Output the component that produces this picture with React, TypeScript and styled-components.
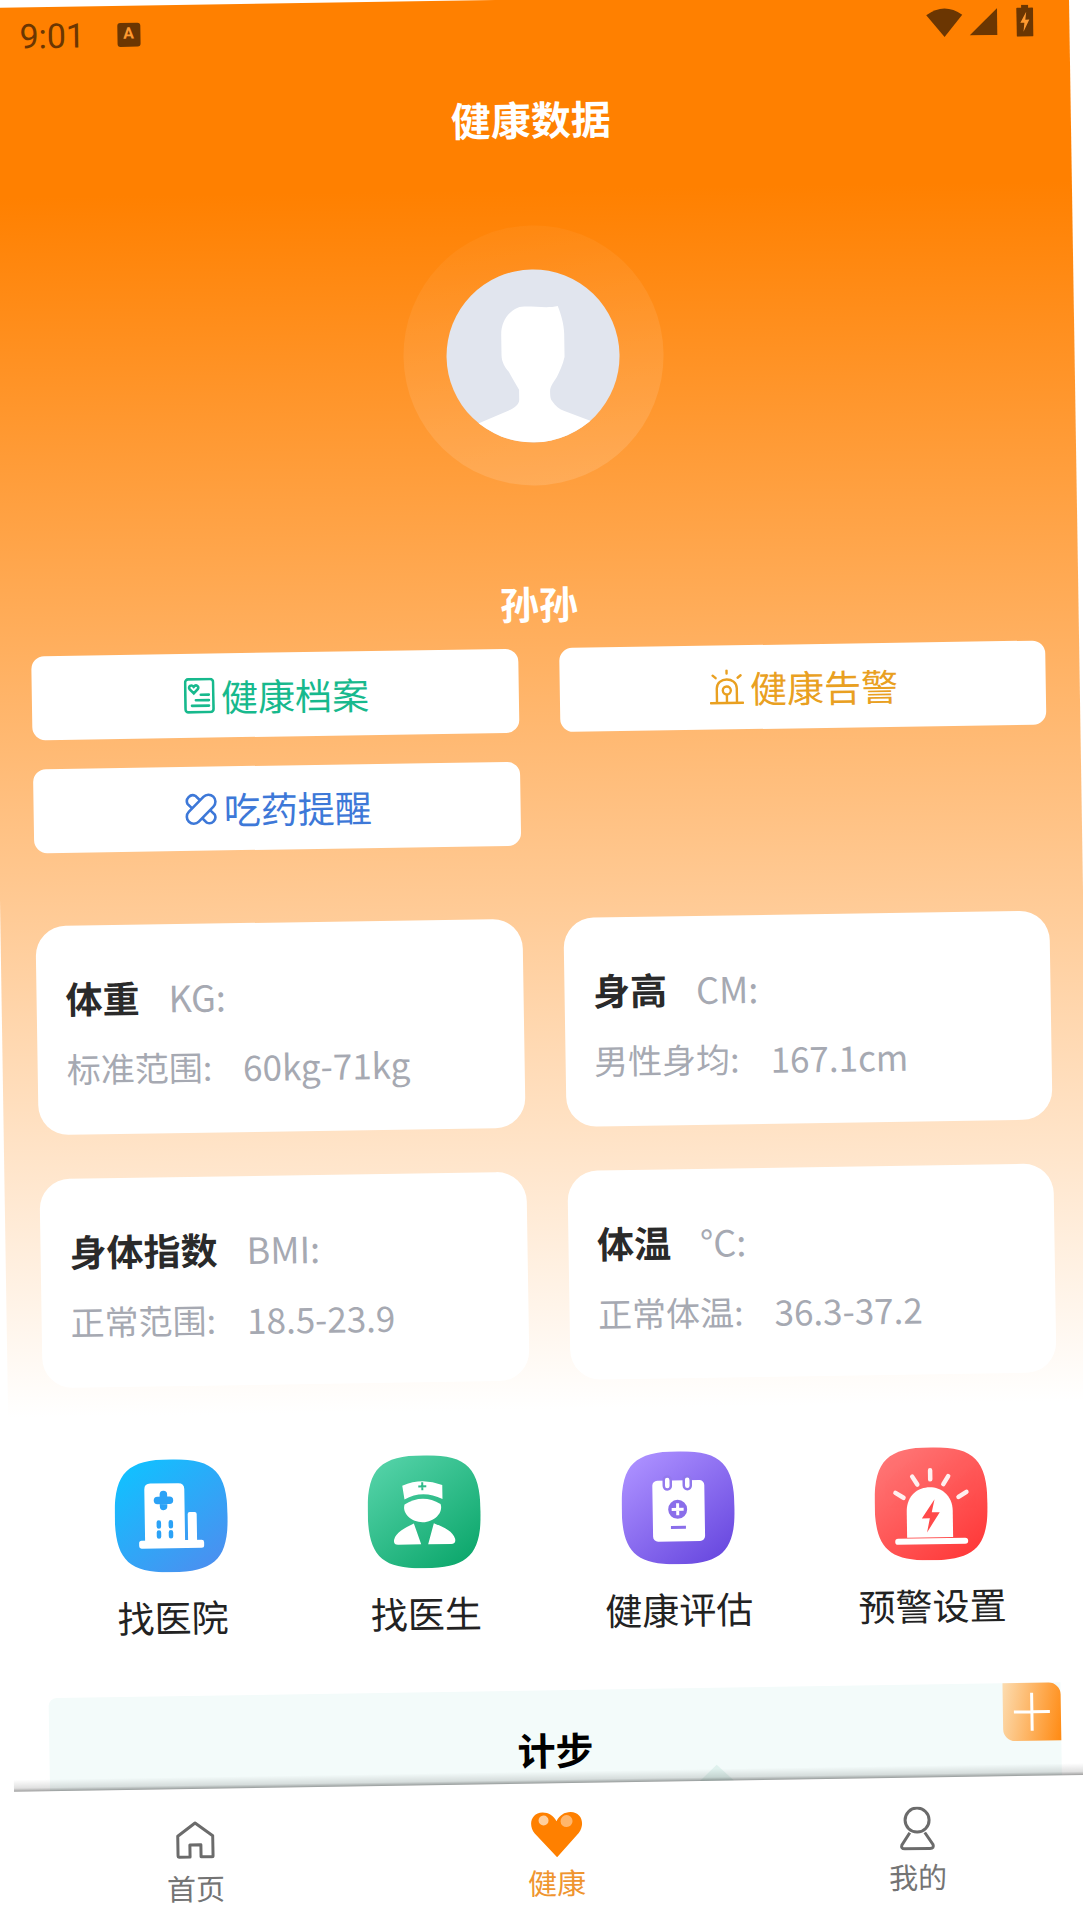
import React from "react";
import styled, { createGlobalStyle } from "styled-components";

const GlobalStyle = createGlobalStyle`
  html, body {
    margin: 0;
    padding: 0;
    width: 1083px;
    height: 1926px;
    overflow: hidden;
    background: #fff;
    font-family: "Noto Sans CJK SC", "Liberation Sans", sans-serif;
  }
`;

const Page = styled.div`
  width: 1083px;
  margin: 8px 0 0 -14px;
  transform-origin: 0 0;
  transform: rotate(-0.9deg);
  background: linear-gradient(180deg, #ff8000 0, #ff8000 190px, #fff 1410px);
`;

const StatusBar = styled.div`
  height: 58px;
  padding: 0 36px 0 33px;
  display: flex;
  align-items: center;
  color: #6b3602;
`;

const Time = styled.span`
  font-family: Roboto, sans-serif;
  font-size: 34px;
`;

const ABadge = styled.span`
  width: 23px;
  height: 24px;
  margin-left: 32px;
  border-radius: 3px;
  background: #6b3602;
  color: #ff9a30;
  font: 700 16px/22px Roboto, sans-serif;
  text-align: center;
`;

const StatusIcons = styled.div`
  margin-left: auto;
  display: flex;
  align-items: center;
  gap: 6px;
  svg:last-child {
    margin-left: 13px;
  }
`;

const Title = styled.h1`
  margin: 31px 0 0;
  padding-left: 3px;
  font-size: 40px;
  line-height: 60px;
  font-weight: 700;
  color: #fff;
  text-align: center;
`;

const AvatarRing = styled.div`
  width: 260px;
  height: 260px;
  margin: 77px auto 0;
  border-radius: 50%;
  background: linear-gradient(170deg, rgba(255, 255, 255, 0.03), rgba(255, 255, 255, 0.14));
  display: flex;
  align-items: center;
  justify-content: center;
`;

const AvatarCircle = styled.div`
  width: 173px;
  height: 173px;
  border-radius: 50%;
  overflow: hidden;
  background: #e1e5ee;
  svg {
    display: block;
  }
`;

const Name = styled.div`
  margin-top: 92px;
  font-size: 39px;
  line-height: 50px;
  font-weight: 700;
  color: #fff;
  text-align: center;
  padding-left: 4px;
`;

const TwoColumns = styled.div<{ $rowGap: number; $top: number }>`
  display: grid;
  grid-template-columns: 1fr 1fr;
  column-gap: 41px;
  row-gap: ${(p) => p.$rowGap}px;
  padding: 0 34px 0 35px;
  margin-top: ${(p) => p.$top}px;
`;

const LinkButton = styled.div<{ $color: string }>`
  height: 84px;
  box-sizing: border-box;
  padding-left: 3px;
  border-radius: 13px;
  background: #fff;
  color: ${(p) => p.$color};
  font-size: 37px;
  display: flex;
  align-items: center;
  justify-content: center;
  gap: 6px;
`;

const DataCard = styled.div`
  height: 209px;
  box-sizing: border-box;
  padding: 47px 29px 0;
  border-radius: 30px;
  background: #fff;
`;

const CardLine = styled.div<{ $second?: boolean }>`
  display: flex;
  align-items: center;
  height: 50px;
  margin-top: ${(p) => (p.$second ? 20 : 0)}px;
  white-space: nowrap;
  font-size: 34px;
  color: #a6a9b2;
`;

const CardName = styled.span`
  font-size: 37px;
  font-weight: 700;
  color: #2a2a2a;
  margin-right: 29px;
`;

const CardUnit = styled.span`
  font-size: 36px;
`;

const CardValue = styled.span`
  margin-left: 31px;
  font-size: 35px;
`;

const Actions = styled.div`
  margin-top: 73px;
  padding: 0 35px;
  display: grid;
  grid-template-columns: repeat(4, 1fr);
`;

const Action = styled.div`
  display: flex;
  flex-direction: column;
  align-items: center;
`;

const ActionLabel = styled.div`
  margin-top: 19px;
  font-size: 37px;
  line-height: 50px;
  color: #222;
`;

const StepPanel = styled.div`
  position: relative;
  height: 93px;
  margin: 55px 35px 0 36px;
  background: #f3fbfa;
  border-radius: 8px 0 0 0;
  text-align: center;
`;

const StepTitle = styled.div`
  padding-top: 34px;
  font-size: 38px;
  line-height: 50px;
  font-weight: 700;
  color: #000;
`;

const StepMark = styled.div`
  position: absolute;
  left: 650px;
  bottom: 0;
  width: 0;
  height: 0;
  border-left: 17px solid transparent;
  border-right: 17px solid transparent;
  border-bottom: 16px solid #dff1ed;
`;

const AddButton = styled.div`
  position: absolute;
  top: 0;
  right: 0;
  width: 58px;
  height: 58px;
  border-radius: 0 12px 0 12px;
  background: linear-gradient(100deg, #fcdcb0 0, #ff8a12 100%);
  svg {
    display: block;
  }
`;

const TabBar = styled.div`
  position: relative;
  height: 170px;
  background: #fff;
  display: grid;
  grid-template-columns: repeat(3, 1fr);
  &::before {
    content: "";
    position: absolute;
    left: 0;
    right: 0;
    top: -12px;
    height: 12px;
    background: linear-gradient(180deg, rgba(0, 0, 0, 0), rgba(0, 0, 0, 0.12) 70%, rgba(0, 0, 0, 0.38));
  }
`;

const Tab = styled.div<{ $active?: boolean }>`
  height: 121px;
  display: flex;
  flex-direction: column;
  align-items: center;
  color: ${(p) => (p.$active ? "#ef952f" : "#747474")};
`;

const TabIcon = styled.div`
  height: 100px;
  display: flex;
  align-items: center;
  justify-content: center;
  box-sizing: border-box;
  padding-top: 2px;
`;

const TabLabel = styled.div`
  margin-top: -22px;
  font-size: 29px;
  line-height: 40px;
`;

const WifiIcon = () => (
  <svg width="38" height="30" viewBox="0 0 38 30">
    <path d="M19 30 L1 8 Q19 -5 37 8 Z" fill="#6b3602" />
  </svg>
);

const SignalIcon = () => (
  <svg width="28" height="27" viewBox="0 0 28 27">
    <path d="M0 27 L28 0 V27 Z" fill="#6b3602" />
  </svg>
);

const BatteryIcon = () => (
  <svg width="17" height="32" viewBox="0 0 17 32">
    <path d="M5 0 H12 V3 H16 Q17 3 17 4 V31 Q17 32 16 32 H1 Q0 32 0 31 V4 Q0 3 1 3 H5 Z" fill="#6b3602" />
    <path d="M10 7 L4 18 H8 L7 27 L13 15 H9 Z" fill="#ff9a30" />
  </svg>
);

const AvatarFigure = () => (
  <svg width="173" height="173" viewBox="0 0 173 173">
    <path
      d="M72 38 C80 35 100 40 112 37 C115 45 118 55 118 65 L118 88 C116 96 113 102 110 108 C107 113 103 117 103 122 C103 126 103 130 105 132 C108 137 112 140 117 142 L150 155 L150 173 L26 173 L26 155 L63 140 C67 138 72 135 72 130 L72 120 C68 113 65 108 62 102 C58 97 55 92 55 85 L55 65 C55 52 62 42 72 38 Z"
      fill="#fff"
    />
  </svg>
);

const RecordIcon = () => (
  <svg width="31" height="36" viewBox="0 0 31 36" fill="none" stroke="currentColor" strokeWidth="2.6" strokeLinecap="round">
    <rect x="1.5" y="1.5" width="28" height="33" rx="3" />
    <path d="M10 15.5 L5.8 11.2 C4.2 8.6 7.6 6.2 10 9 C12.4 6.2 15.8 8.6 14.2 11.2 Z" />
    <path d="M17 17 H25 M12 22.5 H25 M8 28 H25" />
  </svg>
);

const AlertIcon = () => (
  <svg width="34" height="36" viewBox="0 0 34 36" fill="none" stroke="currentColor" strokeWidth="2.4" strokeLinecap="round">
    <path d="M7 33 V19 C7 7 27 7 27 19 V33" />
    <path d="M1 33.5 H33" />
    <circle cx="17" cy="21" r="4" />
    <path d="M17 26 V33 M17 1 V4 M3 6 L6 8.5 M31 6 L28 8.5" />
  </svg>
);

const PillIcon = () => (
  <svg width="33" height="33" viewBox="0 0 33 33" fill="none" stroke="currentColor" strokeWidth="2.6">
    <rect x="-1" y="9.5" width="35" height="14" rx="7" transform="rotate(-45 16.5 16.5)" />
    <path d="M15.5 7.5 L11 3 A6 6 0 0 0 3 11 L7.5 15.5 M25.5 17.5 L30 22 A6 6 0 0 1 22 30 L17.5 25.5" />
  </svg>
);

const SQUIRCLE = "M56.5 0 C100 0 113 13 113 56.5 C113 100 100 113 56.5 113 C13 113 0 100 0 56.5 C0 13 13 0 56.5 0 Z";

const Squircle = ({ id, from, to, children }: { id: string; from: string; to: string; children: React.ReactNode }) => (
  <svg width="113" height="113" viewBox="0 0 113 113">
    <defs>
      <linearGradient id={id} x1="0.15" y1="0.05" x2="0.85" y2="0.95">
        <stop offset="0" stopColor={from} />
        <stop offset="1" stopColor={to} />
      </linearGradient>
    </defs>
    <path d={SQUIRCLE} fill={`url(#${id})`} />
    {children}
  </svg>
);

const HospitalIcon = () => (
  <Squircle id="hospital" from="#12c0ff" to="#4a90f0">
    <path d="M30 85 V30 Q30 24 36 24 H64 Q70 24 70 30 V85 Z" fill="#fff" />
    <rect x="24" y="81" width="65" height="8" rx="2.5" fill="#fff" />
    <rect x="73" y="53" width="9" height="32" rx="2" fill="#fff" />
    <path d="M49 35 V47 M43 41 H55" stroke="#2ba2f6" strokeWidth="7.5" strokeLinecap="round" />
    <path d="M44 63 V67 M56 63 V67 M44 73 V77 M56 73 V77" stroke="#2ba2f6" strokeWidth="4.5" strokeLinecap="round" />
  </Squircle>
);

const DoctorIcon = () => (
  <Squircle id="doctor" from="#52d1a6" to="#0ea86d">
    <path d="M35 30 Q55 22 75 30 V44 Q55 34 37 44 Z" fill="#fff" />
    <path d="M55 27 V35 M51 31 H59" stroke="#2fbb8a" strokeWidth="2" />
    <path d="M37 49 Q55 38 73 49 C76 58 66 67 55 67 C44 67 34 58 37 49 Z" fill="#fff" />
    <path d="M30 89 Q25 89 26 84 C28 76 38 72 46 68 L53 89 Z M60 89 L66 68 C75 72 85 76 87 84 Q88 89 83 89 Z" fill="#fff" />
  </Squircle>
);

const AssessIcon = () => (
  <Squircle id="assess" from="#ab8fff" to="#6a4ae0">
    <rect x="31" y="29" width="52" height="61" rx="5" fill="#fff" />
    <rect x="42.5" y="25" width="7" height="13" rx="3.5" fill="#fff" stroke="#9479ee" strokeWidth="2.5" />
    <rect x="62.5" y="25" width="7" height="13" rx="3.5" fill="#fff" stroke="#9077ec" strokeWidth="2.5" />
    <circle cx="56" cy="58" r="9.5" fill="#8a6eea" />
    <path d="M56 52 V64 M50 58 H62" stroke="#fff" strokeWidth="3" />
    <path d="M49 76 H64" stroke="#8a6eea" strokeWidth="3" />
  </Squircle>
);

const WarnIcon = () => (
  <Squircle id="warn" from="#ff7575" to="#ff3a3a">
    <path d="M32 90 V64 C32 32 78 32 78 64 V90 Z" fill="#fff" />
    <rect x="20" y="91" width="73" height="6" rx="3" fill="#fff" />
    <path d="M56 23 V32 M38 29 L43 37 M74 29 L69 37 M21 45 L29 50 M92 45 L84 50" stroke="#fff" strokeWidth="4.5" strokeLinecap="round" opacity="0.9" />
    <path d="M60 52 L47 71 H55 L52 85 L65 65 H57 Z" fill="#ff4a4a" />
  </Squircle>
);

const PlusIcon = () => (
  <svg width="58" height="58" viewBox="0 0 58 58">
    <path d="M29 10 V48 M11 29 H47" stroke="#fff" strokeWidth="3" />
  </svg>
);

const HomeIcon = () => (
  <svg width="39" height="38" viewBox="0 0 39 38" fill="none" stroke="#6b6b6b" strokeWidth="3" strokeLinejoin="round">
    <path d="M2 35 V15 L19.5 2 L37 15 V35 Q37 36 36 36 H25 V24 H14 V36 H3 Q2 36 2 35 Z" />
  </svg>
);

const HeartIcon = () => (
  <svg width="52" height="46" viewBox="0 0 52 46">
    <path d="M26 46 L4 22 C-3 13 1 1 12 1 C18 1 23 4 26 10 C29 4 34 1 40 1 C51 1 55 13 48 22 Z" fill="#ff8000" />
    <circle cx="13" cy="9" r="5" fill="#ffcf9e" />
    <circle cx="36" cy="10" r="6" fill="#ffb66c" />
  </svg>
);

const PersonIcon = () => (
  <svg width="37" height="44" viewBox="0 0 37 44" fill="none" stroke="#6b6b6b" strokeWidth="3">
    <circle cx="18.5" cy="13.5" r="12" />
    <path d="M11 26 L3 38 Q1.5 42 6 42 H31 Q35.5 42 34 38 L26 26" />
  </svg>
);

const buttons = [
  { label: "健康档案", color: "#17b98d", icon: <RecordIcon /> },
  { label: "健康告警", color: "#e9a021", icon: <AlertIcon /> },
  { label: "吃药提醒", color: "#3d78d8", icon: <PillIcon /> },
];

const cards = [
  { name: "体重", unit: "KG:", label: "标准范围:", value: "60kg-71kg" },
  { name: "身高", unit: "CM:", label: "男性身均:", value: "167.1cm" },
  { name: "身体指数", unit: "BMI:", label: "正常范围:", value: "18.5-23.9" },
  { name: "体温", unit: "°C:", label: "正常体温:", value: "36.3-37.2" },
];

const actions = [
  { label: "找医院", icon: <HospitalIcon /> },
  { label: "找医生", icon: <DoctorIcon /> },
  { label: "健康评估", icon: <AssessIcon /> },
  { label: "预警设置", icon: <WarnIcon /> },
];

const App = () => {
  return (
    <>
      <GlobalStyle />
      <Page>
        <StatusBar>
          <Time>9:01</Time>
          <ABadge>A</ABadge>
          <StatusIcons>
            <WifiIcon />
            <SignalIcon />
            <BatteryIcon />
          </StatusIcons>
        </StatusBar>
        <Title>健康数据</Title>
        <AvatarRing>
          <AvatarCircle>
            <AvatarFigure />
          </AvatarCircle>
        </AvatarRing>
        <Name>孙孙</Name>
        <TwoColumns $rowGap={29} $top={21}>
          {buttons.map((b) => (
            <LinkButton key={b.label} $color={b.color}>
              {b.icon}
              {b.label}
            </LinkButton>
          ))}
        </TwoColumns>
        <TwoColumns $rowGap={44} $top={73}>
          {cards.map((c) => (
            <DataCard key={c.name}>
              <CardLine>
                <CardName>{c.name}</CardName>
                <CardUnit>{c.unit}</CardUnit>
              </CardLine>
              <CardLine $second>
                {c.label}
                <CardValue>{c.value}</CardValue>
              </CardLine>
            </DataCard>
          ))}
        </TwoColumns>
        <Actions>
          {actions.map((a) => (
            <Action key={a.label}>
              {a.icon}
              <ActionLabel>{a.label}</ActionLabel>
            </Action>
          ))}
        </Actions>
        <StepPanel>
          <StepTitle>计步</StepTitle>
          <StepMark />
          <AddButton>
            <PlusIcon />
          </AddButton>
        </StepPanel>
        <TabBar>
          <Tab>
            <TabIcon>
              <HomeIcon />
            </TabIcon>
            <TabLabel>首页</TabLabel>
          </Tab>
          <Tab $active>
            <TabIcon>
              <HeartIcon />
            </TabIcon>
            <TabLabel>健康</TabLabel>
          </Tab>
          <Tab>
            <TabIcon>
              <PersonIcon />
            </TabIcon>
            <TabLabel>我的</TabLabel>
          </Tab>
        </TabBar>
      </Page>
    </>
  );
};

export default App;
